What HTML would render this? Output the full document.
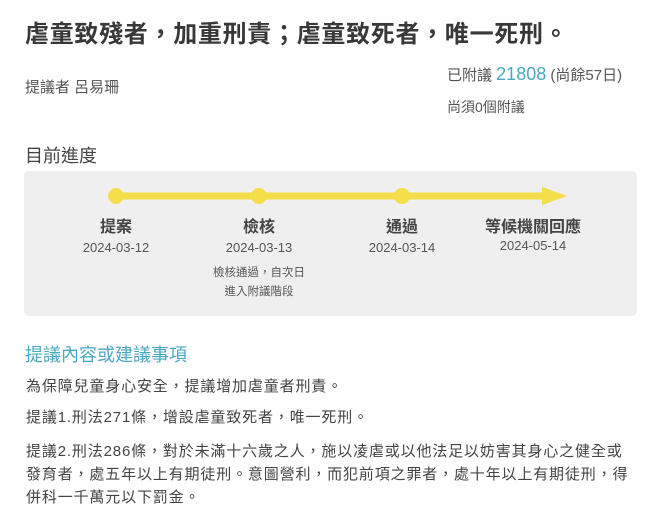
<!DOCTYPE html>
<html><head><meta charset="utf-8"><style>
*{margin:0;padding:0;box-sizing:border-box}
body{width:656px;height:504px;overflow:hidden;background:#fff;font-family:"Liberation Sans","Noto Sans CJK TC",sans-serif;color:#333;position:relative}
.a{position:absolute;white-space:nowrap}
h1{position:absolute;left:25px;top:14px;font-size:24px;font-weight:bold;color:#383838;letter-spacing:0.7px;white-space:nowrap}
.g{color:#555}
.box{position:absolute;left:24px;top:171px;width:613px;height:145px;background:#efefef;border-radius:5px}
.lbl{position:absolute;width:160px;margin-left:-80px;text-align:center;white-space:nowrap}
.t{font-size:16px;font-weight:bold;color:#444;top:213px}
.d{font-size:13px;color:#555;top:240px}
.n{font-size:11.5px;color:#555;top:264px;line-height:19px}
p{position:absolute;left:26px;font-size:15px;color:#444;white-space:nowrap;letter-spacing:0.85px}
</style></head><body>
<h1>虐童致殘者，加重刑責；虐童致死者，唯一死刑。</h1>
<div class="a g" style="left:25px;top:76px;font-size:15px">提議者 呂易珊</div>
<div class="a g" style="left:447px;top:64px;font-size:15px">已附議 <span style="color:#4aa8c2;font-size:18px">21808</span> (尚餘57日)</div>
<div class="a g" style="left:447px;top:97px;font-size:14px">尚須0個附議</div>
<div class="a" style="left:25px;top:142px;font-size:18px;color:#444">目前進度</div>
<div class="box"></div>
<svg class="a" style="left:0;top:0" width="656" height="504">
<line x1="116" y1="196" x2="545" y2="196" stroke="#f5de4a" stroke-width="7"/>
<polygon points="542,187 567,196 542,205" fill="#f5de4a"/>
<circle cx="116" cy="196" r="8" fill="#f5de4a"/>
<circle cx="259" cy="196" r="8" fill="#f5de4a"/>
<circle cx="402" cy="196" r="8" fill="#f5de4a"/>
</svg>
<div class="lbl t" style="left:116px">提案</div>
<div class="lbl t" style="left:259px">檢核</div>
<div class="lbl t" style="left:402px">通過</div>
<div class="lbl t" style="left:533px">等候機關回應</div>
<div class="lbl d" style="left:116px">2024-03-12</div>
<div class="lbl d" style="left:259px">2024-03-13</div>
<div class="lbl d" style="left:402px">2024-03-14</div>
<div class="lbl d" style="left:533px;top:238px">2024-05-14</div>
<div class="lbl n" style="left:259px">檢核通過，自次日<br>進入附議階段</div>
<div class="a" style="left:25px;top:341px;font-size:18px;color:#4aa8c2">提議內容或建議事項</div>
<p style="top:375px">為保障兒童身心安全，提議增加虐童者刑責。</p>
<p style="top:406px">提議1.刑法271條，增設虐童致死者，唯一死刑。</p>
<p style="top:440px;line-height:23px">提議2.刑法286條，對於未滿十六歲之人，施以凌虐或以他法足以妨害其身心之健全或<br>發育者，處五年以上有期徒刑。意圖營利，而犯前項之罪者，處十年以上有期徒刑，得<br>併科一千萬元以下罰金。</p>
</body></html>
